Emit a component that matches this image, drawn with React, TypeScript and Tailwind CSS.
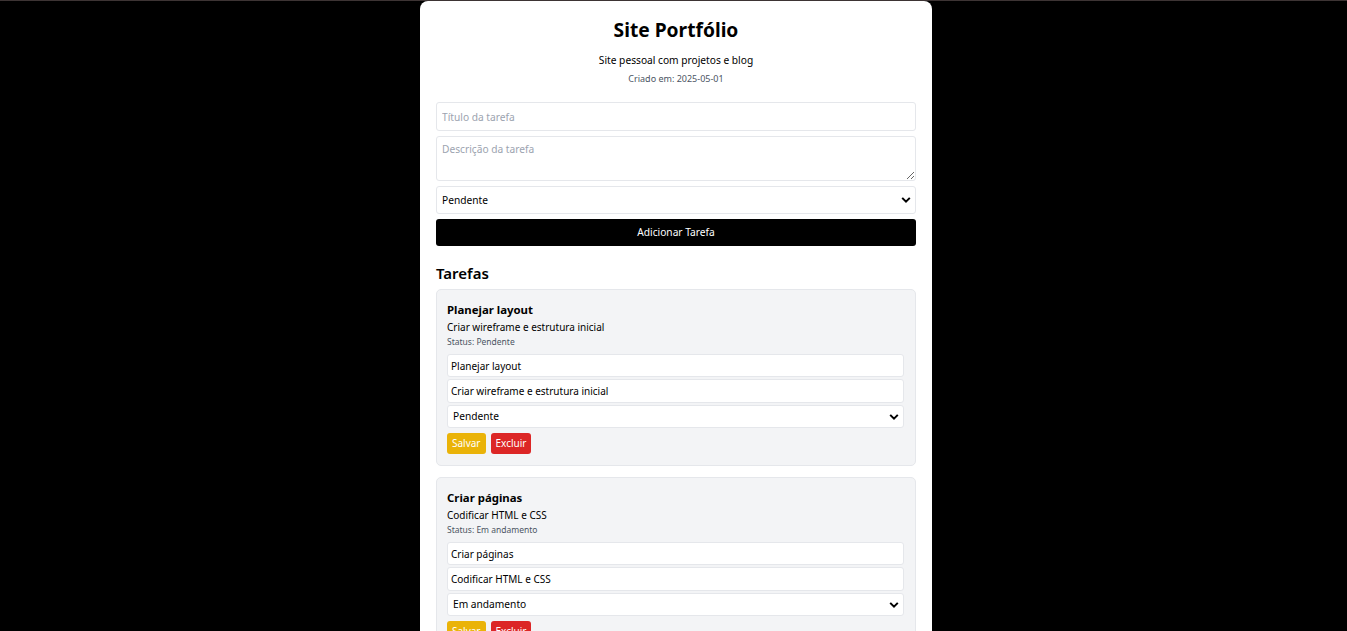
const tasks = [
  { title: 'Planejar layout', desc: 'Criar wireframe e estrutura inicial', status: 'Pendente' },
  { title: 'Criar páginas', desc: 'Codificar HTML e CSS', status: 'Em andamento' },
]

function Chevron() {
  return (
    <svg width="10" height="7" viewBox="0 0 10 7" className="pointer-events-none absolute right-[5px] top-1/2 -translate-y-1/2">
      <path d="M1.2 1.4 5 5.2 8.8 1.4" fill="none" stroke="#000" strokeWidth="2" />
    </svg>
  )
}

function StatusSelect({ value, className }: { value: string; className: string }) {
  return (
    <div className="relative">
      <select
        defaultValue={value}
        className={`block w-full appearance-none rounded-[3px] border border-[#e5e7eb] bg-white text-[10.2px] text-black outline-none ${className}`}
      >
        <option>Pendente</option>
        <option>Em andamento</option>
        <option>Concluída</option>
      </select>
      <Chevron />
    </div>
  )
}

function TaskCard({ title, desc, status }: { title: string; desc: string; status: string }) {
  return (
    <div className="rounded-[5px] border border-[#e5e7eb] bg-[#f3f4f6] pl-[10px] pr-[11px] pt-[12px] pb-[11px]">
      <h3 className="text-[11.4px] leading-[16px] font-bold text-black">{title}</h3>
      <p className="mt-[2px] text-[10px] leading-[15px] text-black">{desc}</p>
      <p className="text-[8.5px] leading-[13px] text-[#4b5563]">Status: {status}</p>

      <div className="mt-[6px] flex flex-col gap-[2px]">
        <input
          defaultValue={title}
          className="block h-[23px] w-full rounded-[3px] border border-[#e5e7eb] bg-white px-[3px] text-[10px] text-black outline-none"
        />
        <input
          defaultValue={desc}
          className="block h-[24px] w-full rounded-[3px] border border-[#e5e7eb] bg-white px-[3px] text-[10px] text-black outline-none"
        />
        <StatusSelect value={status} className="h-[23px] px-[5px]" />
      </div>

      <div className="mt-[5px] flex gap-[5px]">
        <button className="h-[21px] rounded-[3px] bg-[#eab308] px-[5px] text-[10px] text-white">Salvar</button>
        <button className="h-[21px] rounded-[3px] bg-[#dc2626] px-[5px] text-[10px] text-white">Excluir</button>
      </div>
    </div>
  )
}

export default function App() {
  return (
    <div className="min-h-screen border-t border-[#3d3434] bg-black pl-[5px] font-['Noto_Sans',sans-serif]">
      <div className="mx-auto w-[512px] rounded-lg bg-white px-4 pt-[15px] pb-4">
        <h1 className="text-center text-[19.2px] leading-[28px] font-bold text-black">Site Portfólio</h1>
        <p className="mt-[8px] text-center text-[10.2px] leading-[16px] text-black">Site pessoal com projetos e blog</p>
        <p className="mt-[4px] text-center text-[9px] leading-[14px] text-[#4b5563]">Criado em: 2025-05-01</p>

        <div className="mt-[16px] flex flex-col gap-[5px]">
          <input
            placeholder="Título da tarefa"
            className="block h-[29px] w-full rounded-[3px] border border-[#e5e7eb] px-[5px] text-[10.2px] text-black outline-none placeholder:text-[#9ca3af]"
          />
          <textarea
            placeholder="Descrição da tarefa"
            className="block h-[45px] w-full rounded-[3px] border border-[#e5e7eb] px-[5px] pt-[5px] text-[10.2px] text-black outline-none placeholder:text-[#9ca3af]"
          />
          <StatusSelect value="Pendente" className="h-[28px] px-[5px] pt-[2px]" />
          <button className="h-[27px] w-full rounded-[3px] bg-black text-[10.2px] text-white">Adicionar Tarefa</button>
        </div>

        <h2 className="mt-[16px] text-[15px] leading-[22px] font-semibold text-black">Tarefas</h2>

        <div className="mt-[5px] flex flex-col gap-[11px]">
          {tasks.map((t) => (
            <TaskCard key={t.title} {...t} />
          ))}
        </div>
      </div>
    </div>
  )
}
